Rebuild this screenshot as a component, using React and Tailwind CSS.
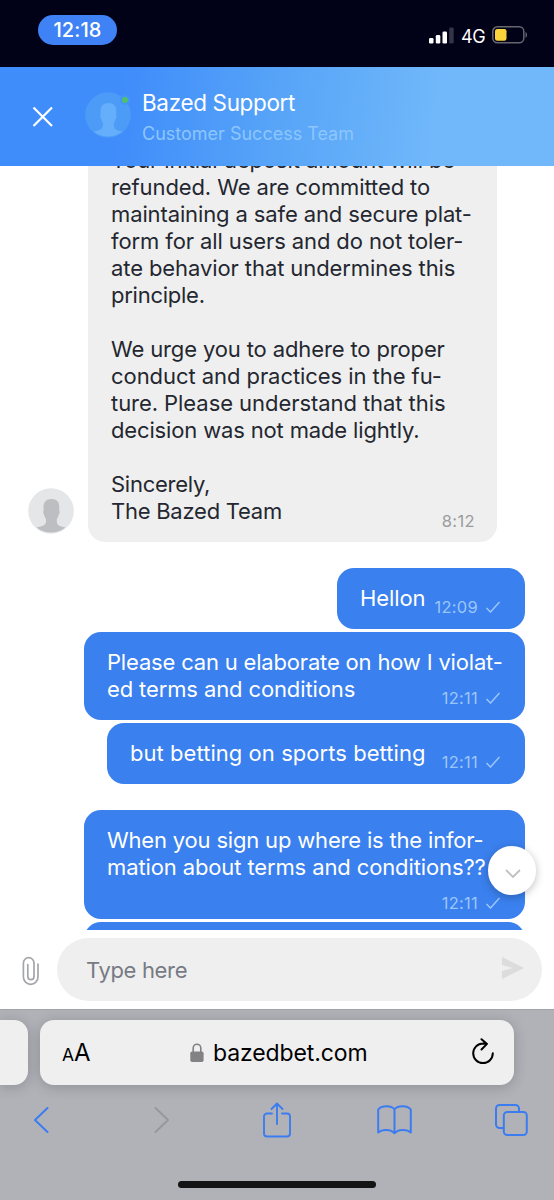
import clsx from 'clsx';

const SUPPORT_LINES = [
  { text: 'Your initial deposit amount will be', track: 'tracking-[-0.11px]' },
  { text: 'refunded. We are committed to', track: 'tracking-[-0.1px]' },
  { text: 'maintaining a safe and secure plat-', track: 'tracking-[-0.12px]' },
  { text: 'form for all users and do not toler-', track: 'tracking-[-0.1px]' },
  { text: 'ate behavior that undermines this', track: 'tracking-[-0.09px]' },
  { text: 'principle.', track: 'tracking-[-0.25px]' },
  { text: '' },
  { text: 'We urge you to adhere to proper', track: 'tracking-[-0.13px]' },
  { text: 'conduct and practices in the fu-', track: 'tracking-[-0.06px]' },
  { text: 'ture. Please understand that this', track: 'tracking-[-0.06px]' },
  { text: 'decision was not made lightly.', track: 'tracking-[-0.15px]' },
  { text: '' },
  { text: 'Sincerely,', track: 'tracking-[-0.26px]' },
  { text: 'The Bazed Team', track: 'tracking-[-0.25px]' },
];

function Avatar({ className }) {
  return (
    <svg viewBox="0 0 46 46" className={clsx('block h-[46px] w-[46px]', className)}>
      <circle cx="23" cy="23" r="22.8" className="fill-(--avatar-bg)" />
      <path
        d="M23.500 11c5.300 0 7.800 3 7.800 8.200l-.1 3.500c.7.5.6 3-.6 4.300-.4 1.800-1 3-1.800 4v3c.5 3.500 3.500 4.500 8.500 5.500A22.800 22.800 0 0 1 8.500 39.500c5-1 9-2 9.500-5.500v-3c-.8-1-1.400-2.200-1.800-4-1.200-1.300-1.300-3.800-.6-4.300l-.1-3.500c0-5.200 2.700-8.200 8-8.200z"
        className="fill-(--avatar-fg)"
      />
    </svg>
  );
}

function Stamp({ time, className }) {
  return (
    <span className={clsx('flex items-center text-[16.500px] leading-[20px] tracking-[0.25px] text-[#9cc6fb]', className)}>
      {time}
      <svg viewBox="0 0 14 12" fill="none" stroke="currentColor" strokeWidth="1.5" className="ml-[8px] h-[12px] w-[14px]">
        <path d="M.5 7 4.500 11 13.500 1" />
      </svg>
    </span>
  );
}

function Bubble({ lines, time, className, stampClass }) {
  return (
    <div className={clsx('relative ml-auto rounded-[17px] bg-[#3a80ee] px-[23px] pt-[17px] text-white', className)}>
      {lines.map((line) => (
        <p key={line.text} className={clsx('whitespace-nowrap', line.track)}>{line.text}</p>
      ))}
      <Stamp time={time} className={clsx('absolute right-[25px]', stampClass)} />
    </div>
  );
}

function StatusBar() {
  return (
    <div className="flex h-[67px] items-start justify-between bg-[#010118] pl-[38px] pr-[26px] text-white">
      <div className="mt-[15px] flex h-[30px] w-[79px] items-center justify-center rounded-full bg-[#3f82f6] text-[20px] font-medium tracking-[0.1px]">
        12:18
      </div>
      <div className="mt-[24px] flex h-[22px] items-center">
        <svg viewBox="0 0 25 17" className="h-[17px] w-[25px]">
          <rect x="0" y="11" width="4.500" height="5.500" rx="1.300" fill="#fff" />
          <rect x="6.800" y="8" width="4.500" height="8.500" rx="1.300" fill="#fff" />
          <rect x="13.500" y="4.500" width="4.500" height="12" rx="1.300" fill="#fff" />
          <rect x="20.200" y=".5" width="4.500" height="16" rx="1.300" fill="#343447" />
        </svg>
        <span className="ml-[7px] mt-[2px] w-[25px] whitespace-nowrap text-[18px] tracking-[-0.4px]">4G</span>
        <svg viewBox="0 0 36 18" className="ml-[6px] h-[18px] w-[36px]">
          <rect x=".8" y=".8" width="31" height="16" rx="4.500" fill="none" stroke="#66666f" strokeWidth="1.500" />
          <rect x="3" y="3" width="11.500" height="11.800" rx="2.200" fill="#fcd23c" />
          <path d="M33.500 6v5.800c2-.7 2-5.100 0-5.800z" fill="#66666f" />
        </svg>
      </div>
    </div>
  );
}

function ChatHeader() {
  return (
    <header className="flex h-[99px] bg-linear-[98deg,#3f8cfb_22%,#57a4f8_50%,#70b8fa_78%] pl-[32px] text-white">
      <svg viewBox="0 0 22 22" fill="none" stroke="currentColor" strokeWidth="2.200" className="mt-[39px] h-[22px] w-[22px]">
        <path d="m1.500 1.500 18.500 18.500M20 1.500 1.500 20" />
      </svg>
      <div className="relative ml-[31px] mt-[25px] h-[46px] w-[46px] [--avatar-bg:#4c9bf7] [--avatar-fg:#64aefb]">
        <Avatar />
        <span className="absolute left-[35px] top-[3px] h-[10px] w-[10px] rounded-full border-2 border-[#4693f9] bg-[#4fc16a]" />
      </div>
      <div className="ml-[11px] mt-[22px]">
        <p className="whitespace-nowrap text-[22.500px] leading-[28px] tracking-[-0.35px]">Bazed Support</p>
        <p className="mt-[5px] whitespace-nowrap text-[18px] leading-[24px] text-[#8dc6fd]">
          Customer Success Team
        </p>
      </div>
    </header>
  );
}

function Messages() {
  return (
    <main className="relative h-[764px] shrink-0 overflow-hidden bg-white text-[22px] leading-[27px]">
      <div className="flex items-end pl-[28px]">
        <Avatar className="mb-[8px] [--avatar-bg:#e5e6e8] [--avatar-fg:#bcbec1]" />
        <div className="relative ml-[14px] h-[376px] w-[409px] rounded-b-[17px] bg-[#efefef] px-[23px] text-[#24272f]">
          <div className="-mt-[19px]">
            {SUPPORT_LINES.map((line, i) => (
              <p key={i} className={clsx('h-[27px] whitespace-nowrap', line.track)}>{line.text}</p>
            ))}
          </div>
          <span className="absolute bottom-[11px] right-[22px] text-[16.500px] leading-[20px] tracking-[0.4px] text-[#9b9c9e]">
            8:12
          </span>
        </div>
      </div>

      <div className="mt-[26px] flex flex-col gap-[3px] pr-[29px]">
        <Bubble
          lines={[{ text: 'Hellon', track: 'tracking-[-0.08px]' }]}
          time="12:09"
          className="h-[61px] w-[188px]"
          stampClass="top-[29px]"
        />
        <Bubble
          lines={[
            { text: 'Please can u elaborate on how I violat-', track: 'tracking-[-0.18px]' },
            { text: 'ed terms and conditions', track: 'tracking-[-0.12px]' },
          ]}
          time="12:11"
          className="h-[88px] w-[441px]"
          stampClass="top-[56px]"
        />
        <Bubble
          lines={[{ text: 'but betting on sports betting', track: 'tracking-[0.05px]' }]}
          time="12:11"
          className="h-[61px] w-[418px]"
          stampClass="top-[29px]"
        />
        <Bubble
          lines={[
            { text: 'When you sign up where is the infor-', track: 'tracking-[-0.18px]' },
            { text: 'mation about terms and conditions??', track: 'tracking-[-0.12px]' },
          ]}
          time="12:11"
          className="mt-[23px] h-[109px] w-[441px]"
          stampClass="top-[83px]"
        />
        <div className="ml-auto h-[61px] w-[441px] rounded-[17px] bg-[#3a80ee]" />
      </div>

      <button className="absolute left-[488px] top-[680px] flex h-[49px] w-[48px] items-center justify-center rounded-full bg-white shadow-[0_2px_8px_rgba(0,0,0,0.25)]">
        <svg viewBox="0 0 16 10" fill="none" stroke="#bfc0c2" strokeWidth="1.800" className="ml-[2px] mt-[6px] h-[10px] w-[16px]">
          <path d="m1 1 7 7 7-7" />
        </svg>
      </button>
    </main>
  );
}

function Composer() {
  return (
    <div className="flex h-[79px] bg-white pl-[22px] pt-[8px]">
      <svg viewBox="0 0 18 30" fill="none" stroke="#a4a5a9" strokeWidth="1.700" strokeLinecap="round" className="mt-[18px] h-[30px] w-[18px]">
        <path d="M16 8v13a7.300 7.300 0 0 1-14.600 0V7a5.300 5.300 0 0 1 10.600 0v13.500a3 3 0 0 1-6.200 0V8.500" />
      </svg>
      <div className="ml-[17px] flex h-[63px] w-[485px] items-center justify-between rounded-full bg-[#efefef] pl-[29px] pr-[18px]">
        <span className="mt-[2px] text-[22px] tracking-[-0.35px] text-[#777b84]">Type here</span>
        <svg viewBox="0 0 22 22" fill="#dcdcdd" className="mb-[3px] h-[22px] w-[22px]">
          <path d="M0 0 22 11 0 22V14L11 11 0 8z" />
        </svg>
      </div>
    </div>
  );
}

function BrowserBar() {
  return (
    <footer className="h-[191px] overflow-hidden border-t border-[#a2a3a8] bg-[#b1b2b8]">
      <div className="flex pt-[10px]">
        <div className="h-[65px] w-[28px] rounded-r-[14px] bg-[#efefef] shadow-[0_2px_14px_rgba(0,0,0,0.2)]" />
        <div className="ml-[12px] flex h-[65px] w-[474px] items-center rounded-[14px] bg-[#efefef] pl-[22px] text-black shadow-[0_2px_14px_rgba(0,0,0,0.2)]">
          <span className="flex w-[28px] items-baseline">
            <span className="text-[17.500px]">A</span>
            <span className="text-[24px]">A</span>
          </span>
          <svg viewBox="0 0 14 20" className="ml-[100px] h-[20px] w-[14px]">
            <path d="M3.200 9V5a3.800 3.800 0 0 1 7.600 0v4" fill="none" stroke="#828284" strokeWidth="1.600" />
            <rect x=".3" y="8.500" width="13.300" height="10.500" rx="1.800" fill="#828284" />
          </svg>
          <span className="ml-[9px] mt-px w-[156px] whitespace-nowrap text-[23px] tracking-[-0.1px]">bazedbet.com</span>
          <svg viewBox="0 0 24 28" fill="none" stroke="#000" strokeWidth="2" strokeLinecap="round" strokeLinejoin="round" className="mb-[2px] ml-[102px] h-[28px] w-[24px]">
            <path d="M12 5.500A9.800 9.800 0 1 0 21.800 15.300M10.500 1.200l5.500 4.700-5.500 5.600M12 5.500l3.500.3" />
          </svg>
        </div>
      </div>

      <nav className="-mt-px flex h-[72px] items-center text-[#3b7df0]">
        <svg viewBox="0 0 16 28" fill="none" stroke="currentColor" strokeWidth="2" strokeLinecap="round" strokeLinejoin="round" className="ml-[33px] h-[28px] w-[16px]">
          <path d="M14.500 2 2 14l12.500 12" />
        </svg>
        <svg viewBox="0 0 16 28" fill="none" stroke="#97989e" strokeWidth="2" strokeLinecap="round" strokeLinejoin="round" className="ml-[105px] h-[28px] w-[16px]">
          <path d="m1.500 2 12.500 12-12.500 12" />
        </svg>
        <svg viewBox="0 0 28 36" fill="none" stroke="currentColor" strokeWidth="1.900" strokeLinecap="round" strokeLinejoin="round" className="ml-[93px] h-[36px] w-[28px]">
          <path d="M9 11.500H4a3 3 0 0 0-3 3v17a3 3 0 0 0 3 3h20a3 3 0 0 0 3-3v-17a3 3 0 0 0-3-3h-5M14 22V2M8.500 7 14 1.500 19.500 7" />
        </svg>
        <svg viewBox="0 0 35 30" fill="none" stroke="currentColor" strokeWidth="2" strokeLinecap="round" strokeLinejoin="round" className="ml-[86px] h-[30px] w-[35px]">
          <path d="M17.500 4.500C15 0 4 0 1.200 4.500V27.500C5 24 14 24 17.500 28.300 21 24 30 24 33.800 27.500V4.500C31 0 20 0 17.500 4.500zV28" />
        </svg>
        <svg viewBox="0 0 33 32" fill="none" stroke="currentColor" strokeWidth="2" strokeLinejoin="round" className="ml-[83px] h-[32px] w-[33px]">
          <path d="M8.500 24H4.500A3.500 3.500 0 0 1 1 20.500V4.500A3.500 3.500 0 0 1 4.500 1h16A3.500 3.500 0 0 1 24 4.500V8" />
          <rect x="8.800" y="8" width="23" height="23" rx="3.500" />
        </svg>
      </nav>

      <div className="mx-auto mt-[25px] h-[7px] w-[198px] rounded-full bg-[#151515]" />
    </footer>
  );
}

export default function App() {
  return (
    <div className="flex h-[1200px] w-[554px] flex-col overflow-hidden font-['Inter','Liberation_Sans',sans-serif]">
      <StatusBar />
      <ChatHeader />
      <Messages />
      <Composer />
      <BrowserBar />
    </div>
  );
}
